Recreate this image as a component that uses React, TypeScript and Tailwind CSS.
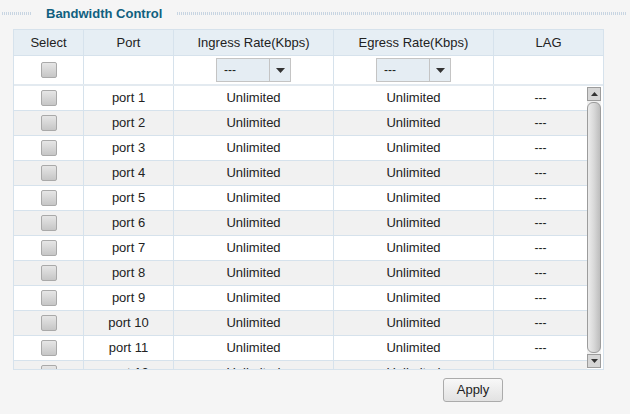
import React from "react";

const ports = Array.from({ length: 12 }, (_, i) => `port ${i + 1}`);

function Checkbox() {
  return (
    <span className="inline-block h-[16px] w-[16px] rounded-[2px] border border-[#a9a9a9] bg-gradient-to-b from-[#e6e6e6] to-[#c6c6c6]" />
  );
}

function Dropdown() {
  return (
    <div className="flex h-[24px] w-[75px] border border-[#c4c4c4] bg-[#e5edf3]">
      <span className="flex flex-1 items-center pl-[7px] text-[12px] leading-none text-[#222]">
        ---
      </span>
      <span className="flex w-[21px] items-center justify-center border-l border-[#c4c4c4]">
        <svg width="9" height="5" viewBox="0 0 9 5">
          <path d="M0 0h9L4.5 5z" fill="#333" />
        </svg>
      </span>
    </div>
  );
}

function Dotted({ className }: { className: string }) {
  return (
    <div
      className={`h-[3px] bg-[repeating-linear-gradient(90deg,#c8d5e2_0_1px,transparent_1px_2px)] ${className}`}
    />
  );
}

function Scrollbar() {
  return (
    <div className="flex w-[14px] flex-col bg-[#f0f0f0]">
      <div className="flex h-[14px] items-center justify-center border border-[#9c9c9c] bg-[#d6d6d6]">
        <svg width="7" height="4" viewBox="0 0 7 4">
          <path d="M3.5 0L7 4H0z" fill="#333" />
        </svg>
      </div>
      <div className="mt-[1px] flex-1 rounded-[6px] border border-[#9c9c9c] bg-gradient-to-r from-[#ececec] via-[#d8d8d8] to-[#bdbdbd]" />
      <div className="mt-[1px] flex h-[14px] items-center justify-center border border-[#9c9c9c] bg-[#d6d6d6]">
        <svg width="7" height="4" viewBox="0 0 7 4">
          <path d="M0 0h7L3.5 4z" fill="#333" />
        </svg>
      </div>
    </div>
  );
}

export default function App() {
  const cell = "flex items-center justify-center border-r border-[#d6e2ec]";

  return (
    <div className="h-[414px] w-[630px] overflow-hidden bg-[#f5f5f5] font-['Liberation_Sans',Arial,sans-serif] text-[13px] text-[#222]">
      <div className="flex h-[27px] items-center">
        <Dotted className="ml-[2px] w-[29px]" />
        <h1 className="px-[15px] text-[13px] font-bold text-[#10607f]">
          Bandwidth Control
        </h1>
        <Dotted className="mr-[4px] flex-1" />
      </div>

      <div className="ml-[13px] mt-[2px] w-[591px] border border-[#d6e2ec] bg-white">
        <div className="grid h-[26px] grid-cols-[70px_90px_160px_160px_1fr] border-b border-[#d6e2ec] bg-[#e6eef4]">
          <div className={cell}>Select</div>
          <div className={cell}>Port</div>
          <div className={cell}>Ingress Rate(Kbps)</div>
          <div className={cell}>Egress Rate(Kbps)</div>
          <div className="flex items-center justify-center">LAG</div>
        </div>

        <div className="grid h-[30px] grid-cols-[70px_90px_160px_160px_1fr] border-b-2 border-[#e3eaf0]">
          <div className={cell}>
            <Checkbox />
          </div>
          <div className={cell} />
          <div className={cell}>
            <Dropdown />
          </div>
          <div className={cell}>
            <Dropdown />
          </div>
          <div />
        </div>

        <div className="flex h-[283px] overflow-hidden">
          <div className="flex-1 overflow-hidden">
            {ports.map((p, i) => (
              <div
                key={p}
                className={`grid h-[25px] shrink-0 grid-cols-[70px_90px_160px_160px_1fr] border-b border-[#d6e2ec] ${
                  i % 2 === 1 ? "bg-[#f1f1f1]" : "bg-white"
                }`}
              >
                <div className={cell}>
                  <Checkbox />
                </div>
                <div className={cell}>{p}</div>
                <div className={cell}>Unlimited</div>
                <div className={cell}>Unlimited</div>
                <div className="flex items-center justify-center text-[12px]">---</div>
              </div>
            ))}
          </div>
          <div className="flex py-[1px]">
            <Scrollbar />
          </div>
          <div className="w-[2px]" />
        </div>
      </div>

      <div className="ml-[443px] mt-[8px]">
        <button className="h-[24px] w-[60px] rounded-[3px] border border-[#ababab] bg-gradient-to-b from-[#f8f8f8] to-[#e2e2e2] text-[13px] text-[#222]">
          Apply
        </button>
      </div>
    </div>
  );
}
